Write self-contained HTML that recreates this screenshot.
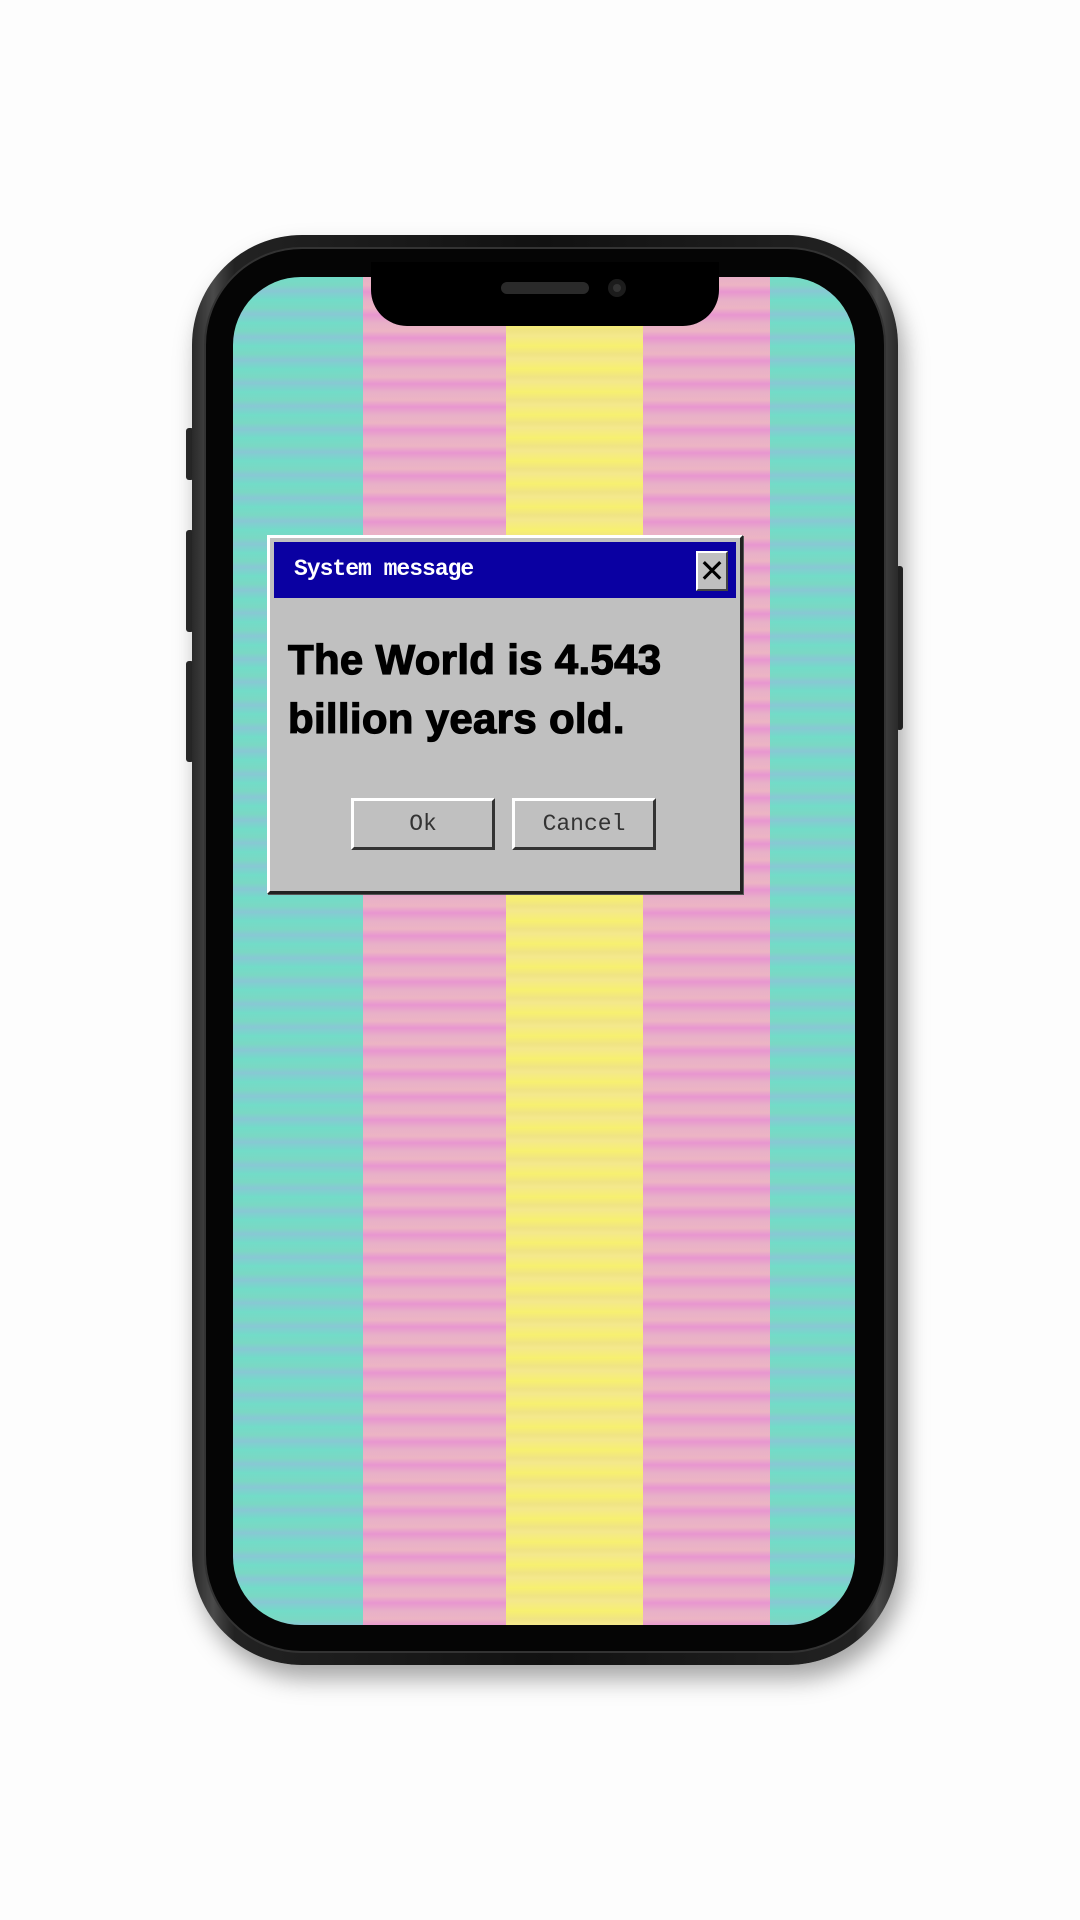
<!DOCTYPE html>
<html><head><meta charset="utf-8"><style>
body{margin:0;width:1080px;height:1920px;background:#fdfdfd;position:relative;overflow:hidden;font-family:"Liberation Sans",sans-serif}
.phone{position:absolute;left:192px;top:235px;width:706px;height:1430px;border-radius:110px;background:linear-gradient(90deg,#2a2a2a,#4a4a4a 3%,#222 6%,#111 50%,#222 94%,#4a4a4a 97%,#2a2a2a);box-shadow:6px 14px 24px rgba(0,0,0,.35)}
.inner{position:absolute;left:12px;top:12px;right:12px;bottom:12px;border-radius:98px;background:#050505;border:2px solid #333}
.btn{position:absolute;background:#2a2a2a;border-radius:3px}
.screen{position:absolute;left:233px;top:277px;width:622px;height:1348px;border-radius:68px;overflow:hidden}
.s{position:absolute;top:0;bottom:0}
.t{background:repeating-linear-gradient(180deg,#72dcc8 0,#7ad8c4 8px,#88c8d4 14px,#72dcc8 23px)}
.p{background:repeating-linear-gradient(180deg,#e8b0c8 0,#ecb4c4 8px,#e896d0 15px,#e8b0c8 23px)}
.y{background:repeating-linear-gradient(180deg,#f7f070 0,#f0e484 8px,#f4e88c 13px,#f7f070 23px)}
.notch{position:absolute;left:371px;top:262px;width:348px;height:64px;background:#000;border-radius:0 0 36px 36px}
.dlg{position:absolute;left:267px;top:535px;width:476px;height:359px;background:#c0c0c0;border:3px solid;border-color:#fff #222 #222 #fff;box-sizing:border-box;box-shadow:1px 1px 0 #555}
.title{position:absolute;left:4px;top:4px;width:462px;height:56px;background:#0a00a2}
.title span{position:absolute;left:20px;top:14px;color:#fff;font:bold 23px "Liberation Mono",monospace;letter-spacing:-1px}
.x{position:absolute;right:8px;top:9px;width:28px;height:36px;background:#c0c0c0;border:2px solid;border-color:#fff #444 #444 #fff;font:32px "Liberation Sans",sans-serif;line-height:36px;text-align:center;color:#000}
.msg{position:absolute;left:18px;top:92px;font-weight:bold;font-size:42px;line-height:59px;color:#000;letter-spacing:0.3px;-webkit-text-stroke:1.2px #000}
.b{position:absolute;top:260px;width:144px;height:52px;box-sizing:border-box;border:3px solid;border-color:#fff #333 #333 #fff;font:23px "Liberation Mono",monospace;text-align:center;line-height:46px;color:#333}
</style></head><body>
<div class="btn" style="left:186px;top:428px;width:8px;height:52px"></div>
<div class="btn" style="left:186px;top:530px;width:8px;height:102px"></div>
<div class="btn" style="left:186px;top:661px;width:8px;height:101px"></div>
<div class="btn" style="left:896px;top:566px;width:7px;height:164px"></div>
<div class="phone"><div class="inner"></div></div>
<div class="screen">
<div class="s t" style="left:0;width:130px"></div>
<div class="s p" style="left:130px;width:143px"></div>
<div class="s y" style="left:273px;width:137px"></div>
<div class="s p" style="left:410px;width:127px"></div>
<div class="s t" style="left:537px;width:85px"></div>
</div>
<div class="notch"><div style="position:absolute;left:130px;top:20px;width:88px;height:12px;border-radius:6px;background:#2a2a2a"></div><div style="position:absolute;left:237px;top:17px;width:18px;height:18px;border-radius:50%;background:#1c1c1c"><div style="margin:5px;width:8px;height:8px;border-radius:50%;background:#333"></div></div></div>
<div class="dlg">
<div class="title"><span>System message</span><div class="x">✕</div></div>
<div class="msg">The World is 4.543<br>billion years old.</div>
<div class="b" style="left:81px">Ok</div>
<div class="b" style="left:242px">Cancel</div>
</div>
</body></html>
